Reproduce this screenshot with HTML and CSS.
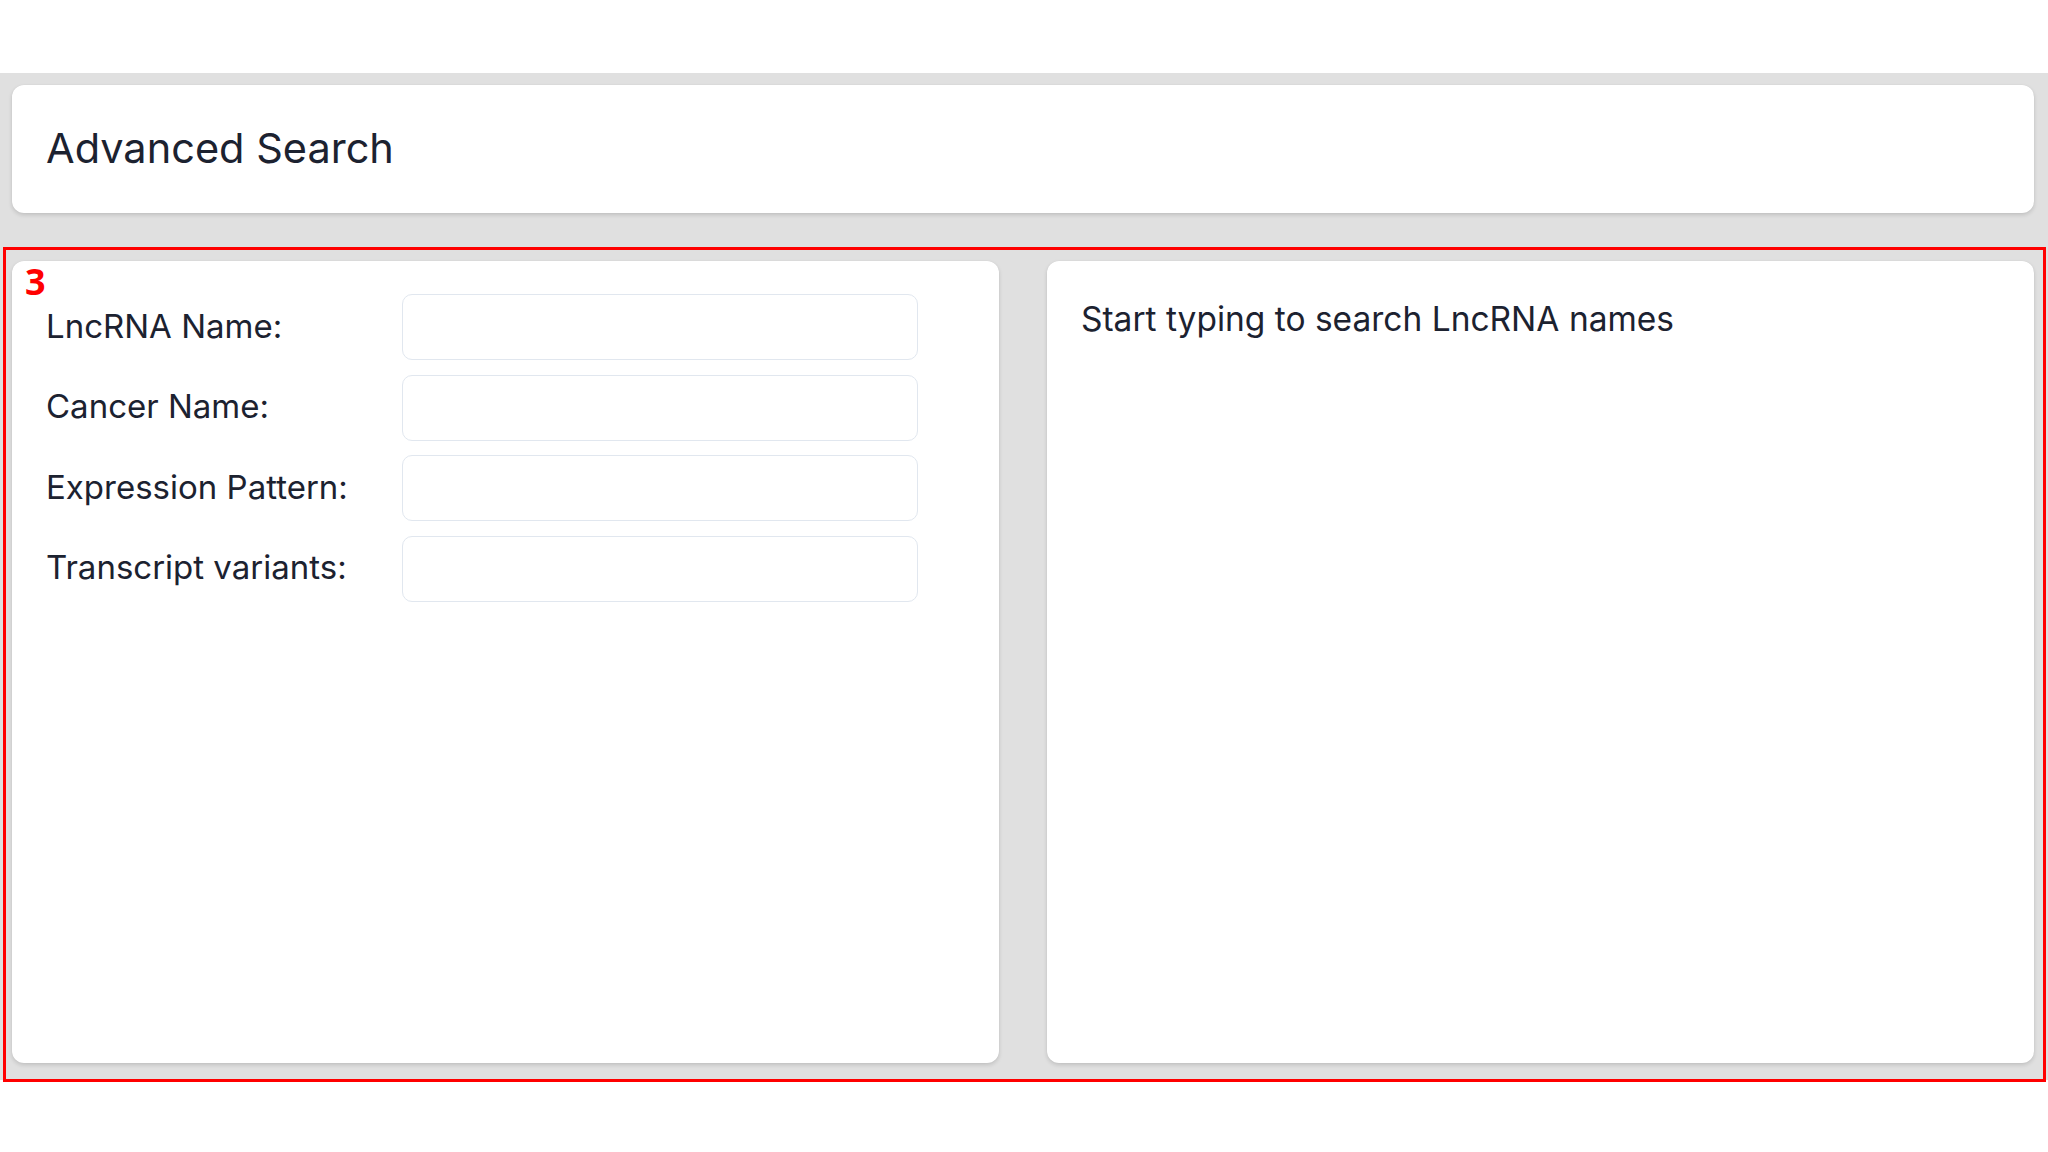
FILE: index.html
```html
<!DOCTYPE html>
<html lang="en">
<head>
<meta charset="utf-8">
<title>Advanced Search</title>
<link rel="stylesheet" href="styles.css">
</head>
<body>
<div class="topbar"></div>
<main class="page">
  <section class="card title-card">
    <h1 class="title">Advanced Search</h1>
  </section>
  <div class="columns">
    <section class="card form-card">
      <div class="form-row">
        <label class="label" for="f1">LncRNA Name:</label>
        <input class="field" id="f1" type="text">
      </div>
      <div class="form-row">
        <label class="label" for="f2">Cancer Name:</label>
        <input class="field" id="f2" type="text">
      </div>
      <div class="form-row">
        <label class="label" for="f3">Expression Pattern:</label>
        <input class="field" id="f3" type="text">
      </div>
      <div class="form-row">
        <label class="label" for="f4">Transcript variants:</label>
        <input class="field" id="f4" type="text">
      </div>
    </section>
    <section class="card result-card">
      <p class="hint">Start typing to search LncRNA names</p>
    </section>
  </div>
</main>
<div class="annotation"></div>
<div class="annotation-num">3</div>
</body>
</html>
```

FILE: styles.css
```css
* { box-sizing: border-box; }

html, body {
  margin: 0;
  padding: 0;
  background: #ffffff;
  font-family: Inter, "Noto Sans", "Liberation Sans", sans-serif;
  color: #1c2230;
}

.topbar {
  height: 73px;
  background: #ffffff;
}

.page {
  background: #e0e0e0;
  padding: 12px 14px 17px 12px;
}

.card {
  background: #ffffff;
  border-radius: 12px;
  box-shadow: 0 2px 4px rgba(0, 0, 0, 0.14), 0 0 1px rgba(0, 0, 0, 0.08);
}

.title-card {
  height: 128px;
  display: flex;
  align-items: center;
  padding: 0 34px 2px;
}

.title {
  margin: 0;
  font-size: 41.5px;
  font-weight: 400;
  color: #1c2230;
}

.columns {
  margin-top: 48px;
  display: grid;
  grid-template-columns: 1fr 1fr;
  column-gap: 48px;
  height: 802px;
}

.form-card {
  padding: 33px 34px;
  display: flex;
  flex-direction: column;
  gap: 14.5px;
}

.form-row {
  display: flex;
  align-items: center;
  height: 66px;
}

.label {
  width: 356px;
  flex: none;
  font-size: 33px;
  padding-bottom: 3px;
  color: #1c2230;
}

.field {
  width: 516px;
  height: 66px;
  border: 1.5px solid #e1e7ef;
  border-radius: 10px;
  background: #ffffff;
  font-family: inherit;
  font-size: 28px;
  padding: 0 16px;
  outline: none;
}

.result-card {
  padding: 34px;
}

.hint {
  margin: 0;
  font-size: 33.5px;
  line-height: 1.45;
  color: #1c2230;
}

.annotation {
  position: absolute;
  left: 3px;
  top: 247px;
  width: 2043px;
  height: 835px;
  border: 3px solid #ff0000;
  pointer-events: none;
}

.annotation-num {
  position: absolute;
  left: 25px;
  top: 264px;
  font-family: "Open Sans", "Noto Sans", sans-serif;
  font-weight: 700;
  font-size: 36px;
  line-height: 1;
  color: #ff0000;
}
```
